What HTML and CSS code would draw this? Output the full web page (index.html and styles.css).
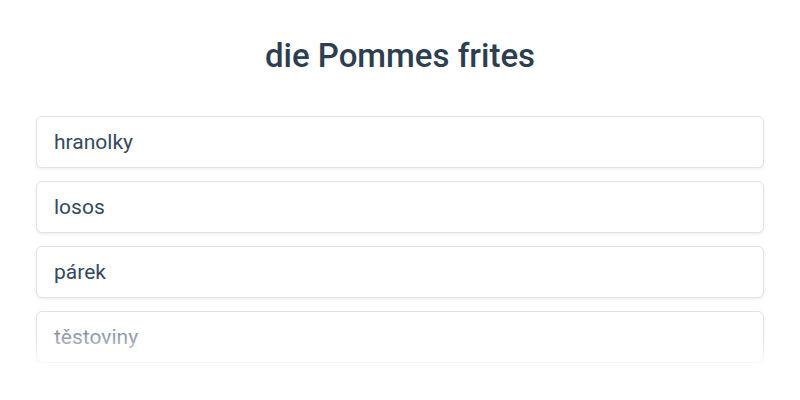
FILE: index.html
```html
<!DOCTYPE html>
<html lang="cs">
<head>
<meta charset="utf-8">
<link rel="stylesheet" href="styles.css">
</head>
<body>
<main class="quiz">
  <h1 class="word">die Pommes frites</h1>
  <div class="options">
    <div class="option">hranolky</div>
    <div class="option">losos</div>
    <div class="option">párek</div>
    <div class="option muted">těstoviny</div>
    <div class="fade"></div>
  </div>
</main>
</body>
</html>
```
FILE: styles.css
```css
html, body {
  margin: 0;
  padding: 0;
  background: #ffffff;
}
body {
  font-family: Roboto, "Noto Sans", sans-serif;
  color: #34495e;
}
.quiz {
  width: 728px;
  margin: 0 auto;
  padding-top: 36px;
}
.word {
  margin: 0 0 40px;
  text-align: center;
  font-size: 33px;
  font-weight: 500;
  line-height: 40px;
  color: #2c3e50;
}
.options {
  position: relative;
  display: flex;
  flex-direction: column;
  gap: 13px;
}
.option {
  box-sizing: border-box;
  height: 52px;
  display: flex;
  align-items: center;
  padding: 0 17px;
  font-size: 21px;
  border: 1px solid #e2e2e2;
  border-radius: 6px;
  box-shadow: 0 1px 3px rgba(0, 0, 0, 0.08);
  background: #fff;
}
.option.muted {
  color: #8795a5;
}
.fade {
  position: absolute;
  left: -10px;
  right: -10px;
  bottom: -10px;
  height: 40px;
  background: linear-gradient(to bottom, rgba(255,255,255,0), rgba(255,255,255,0.7) 70%, #fff);
  pointer-events: none;
}
```
